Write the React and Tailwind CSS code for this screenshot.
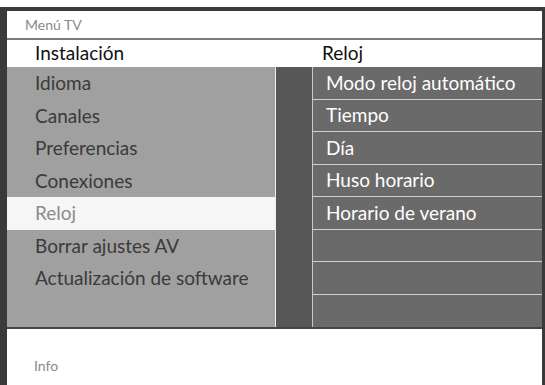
const leftItems = ['Idioma', 'Canales', 'Preferencias', 'Conexiones', 'Reloj', 'Borrar ajustes AV', 'Actualización de software', ''];
const rightItems = ['Modo reloj automático', 'Tiempo', 'Día', 'Huso horario', 'Horario de verano', '', '', ''];

const App = () => {
  return (
    <div className="w-[545px] h-[385px] bg-white pt-[7px] overflow-hidden" style={{ fontFamily: 'Lato, "Open Sans", sans-serif' }}>
      <div className="h-full flex flex-col border-t-4 border-l-[7px] border-r-[3px] border-[#3a3a3a]">
        {/* Title */}
        <div className="h-[29px] shrink-0 flex items-center pl-[18px] text-[14px] text-[#8a8a8a] border-b-2 border-[#7a7a7a]">
          Menú TV
        </div>

        {/* Column headers */}
        <div className="h-[27px] shrink-0 flex items-center text-[19px] text-[#111]">
          <div className="w-[306px] pl-[28px]">Instalación</div>
          <div className="pl-[9px]">Reloj</div>
        </div>

        {/* Body */}
        <div className="h-[262px] shrink-0 flex border-b-2 border-[#444]">
          <div className="w-[268px] grid grid-rows-8 bg-[#a0a0a0]">
            {leftItems.map((item, i) => (
              <div
                key={i}
                className={`flex items-center pl-[28px] text-[19px] ${
                  item === 'Reloj' ? 'bg-[#f6f6f6] text-[#8c8c8c]' : 'text-[#3a3a3a]'
                }`}
              >
                {item}
              </div>
            ))}
          </div>
          <div className="w-px bg-[#eeeeee]" />
          <div className="w-[36px] bg-[#575757]" />
          <div className="w-px bg-[#c8c8c8]" />
          <div className="flex-1 grid grid-rows-8 bg-[#6a6a6a]">
            {rightItems.map((item, i) => (
              <div
                key={i}
                className={`flex items-center pl-[13px] text-[19px] text-white ${
                  i < rightItems.length - 1 ? 'border-b border-[#d0d0d0]' : ''
                }`}
              >
                {item}
              </div>
            ))}
          </div>
        </div>

        {/* Info */}
        <div className="flex-1 flex items-end pb-[9px] pl-[27px] text-[14px] text-[#8a8a8a]">
          Info
        </div>
      </div>
    </div>
  );
};

export default App;
